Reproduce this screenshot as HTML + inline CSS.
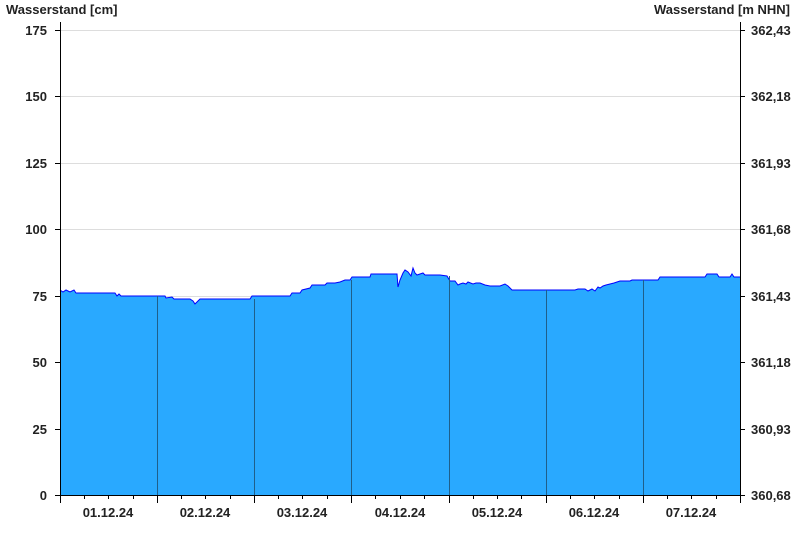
<!DOCTYPE html>
<html><head><meta charset="utf-8"><style>
html,body{margin:0;padding:0;background:#fff}
svg{display:block}
text{font-family:"Liberation Sans",Arial,sans-serif;font-size:13px;font-weight:bold;fill:#222}
</style></head><body>
<svg width="800" height="550" xmlns="http://www.w3.org/2000/svg">
<text x="6" y="14">Wasserstand [cm]</text>
<text x="790" y="14" text-anchor="end">Wasserstand [m NHN]</text>
<g stroke="#ddd" stroke-width="1">
<line x1="60" y1="30.5" x2="740" y2="30.5"/>
<line x1="60" y1="96.5" x2="740" y2="96.5"/>
<line x1="60" y1="163.5" x2="740" y2="163.5"/>
<line x1="60" y1="229.5" x2="740" y2="229.5"/>
<line x1="60" y1="296.5" x2="740" y2="296.5"/>
<line x1="60" y1="362.5" x2="740" y2="362.5"/>
<line x1="60" y1="429.5" x2="740" y2="429.5"/>
</g>
<polygon fill="#29A9FF" points="60,495 60,290 63,292 66,290 70,292 74,290 76,293 115,293 117,296 119,294 121,296 123,296 165,296 166,298 172,297 174,299 190,299 193,301 195,304 198,301 200,299 250,299 252,296 262,296 290,296 292,293 300,293 302,290 310,288 312,285 325,285 327,283 335,283 340,282 345,280 350,280 352,277 370,277 371,274 397,274 398,287 400,280 403,273 405,270 408,272 411,276 413,268 415,273 417,275 423,273 425,275 430,275 432,275 434,275 437,275 440,275 447,276 450,281 455,281 458,285 460,284 463,283 466,284 468,282 473,284 476,283 480,283 485,285 490,286 500,286 505,284 508,286 510,288 512,290 575,290 578,289 585,289 588,291 592,289 595,291 598,287 600,288 603,286 606,285 610,284 614,283 617,282 620,281 630,281 632,280 658,280 660,277 705,277 707,274 717,274 719,277 730,277 732,274 734,277 740,277 740,495"/>
<polyline fill="none" stroke="#0000ff" stroke-width="1" points="60,290 63,292 66,290 70,292 74,290 76,293 115,293 117,296 119,294 121,296 123,296 165,296 166,298 172,297 174,299 190,299 193,301 195,304 198,301 200,299 250,299 252,296 262,296 290,296 292,293 300,293 302,290 310,288 312,285 325,285 327,283 335,283 340,282 345,280 350,280 352,277 370,277 371,274 397,274 398,287 400,280 403,273 405,270 408,272 411,276 413,268 415,273 417,275 423,273 425,275 430,275 432,275 434,275 437,275 440,275 447,276 450,281 455,281 458,285 460,284 463,283 466,284 468,282 473,284 476,283 480,283 485,285 490,286 500,286 505,284 508,286 510,288 512,290 575,290 578,289 585,289 588,291 592,289 595,291 598,287 600,288 603,286 606,285 610,284 614,283 617,282 620,281 630,281 632,280 658,280 660,277 705,277 707,274 717,274 719,277 730,277 732,274 734,277 740,277"/>
<g stroke="#1f5f8a" stroke-width="1">
<line x1="157.5" y1="296" x2="157.5" y2="495"/>
<line x1="254.5" y1="299" x2="254.5" y2="495"/>
<line x1="351.5" y1="280" x2="351.5" y2="495"/>
<line x1="449.5" y1="276" x2="449.5" y2="495"/>
<line x1="546.5" y1="290" x2="546.5" y2="495"/>
<line x1="643.5" y1="280" x2="643.5" y2="495"/>
</g>
<g stroke="#000" stroke-width="1">
<line x1="60.5" y1="22" x2="60.5" y2="495"/>
<line x1="740.5" y1="22" x2="740.5" y2="495"/>
<line x1="60" y1="495.5" x2="740" y2="495.5"/>
<line x1="55" y1="30.5" x2="60" y2="30.5"/><line x1="55" y1="96.5" x2="60" y2="96.5"/><line x1="55" y1="163.5" x2="60" y2="163.5"/><line x1="55" y1="229.5" x2="60" y2="229.5"/><line x1="55" y1="296.5" x2="60" y2="296.5"/><line x1="55" y1="362.5" x2="60" y2="362.5"/><line x1="55" y1="429.5" x2="60" y2="429.5"/><line x1="55" y1="495.5" x2="60" y2="495.5"/>
<line x1="740" y1="30.5" x2="745" y2="30.5"/><line x1="740" y1="96.5" x2="745" y2="96.5"/><line x1="740" y1="163.5" x2="745" y2="163.5"/><line x1="740" y1="229.5" x2="745" y2="229.5"/><line x1="740" y1="296.5" x2="745" y2="296.5"/><line x1="740" y1="362.5" x2="745" y2="362.5"/><line x1="740" y1="429.5" x2="745" y2="429.5"/><line x1="740" y1="495.5" x2="745" y2="495.5"/>
<line x1="60.5" y1="495" x2="60.5" y2="503"/><line x1="157.5" y1="495" x2="157.5" y2="503"/><line x1="254.5" y1="495" x2="254.5" y2="503"/><line x1="351.5" y1="495" x2="351.5" y2="503"/><line x1="449.5" y1="495" x2="449.5" y2="503"/><line x1="546.5" y1="495" x2="546.5" y2="503"/><line x1="643.5" y1="495" x2="643.5" y2="503"/><line x1="740.5" y1="495" x2="740.5" y2="503"/>
</g>
<g stroke="#000" stroke-width="1">
<line x1="84.5" y1="495" x2="84.5" y2="499"/><line x1="108.5" y1="495" x2="108.5" y2="499"/><line x1="133.5" y1="495" x2="133.5" y2="499"/>
<line x1="181.5" y1="495" x2="181.5" y2="499"/><line x1="205.5" y1="495" x2="205.5" y2="499"/><line x1="230.5" y1="495" x2="230.5" y2="499"/>
<line x1="278.5" y1="495" x2="278.5" y2="499"/><line x1="302.5" y1="495" x2="302.5" y2="499"/><line x1="327.5" y1="495" x2="327.5" y2="499"/>
<line x1="375.5" y1="495" x2="375.5" y2="499"/><line x1="400.5" y1="495" x2="400.5" y2="499"/><line x1="424.5" y1="495" x2="424.5" y2="499"/>
<line x1="473.5" y1="495" x2="473.5" y2="499"/><line x1="497.5" y1="495" x2="497.5" y2="499"/><line x1="521.5" y1="495" x2="521.5" y2="499"/>
<line x1="570.5" y1="495" x2="570.5" y2="499"/><line x1="594.5" y1="495" x2="594.5" y2="499"/><line x1="619.5" y1="495" x2="619.5" y2="499"/>
<line x1="667.5" y1="495" x2="667.5" y2="499"/><line x1="691.5" y1="495" x2="691.5" y2="499"/><line x1="716.5" y1="495" x2="716.5" y2="499"/>
</g>
<g text-anchor="end">
<text x="47" y="35">175</text><text x="47" y="101">150</text><text x="47" y="168">125</text><text x="47" y="234">100</text><text x="47" y="301">75</text><text x="47" y="367">50</text><text x="47" y="434">25</text><text x="47" y="500">0</text>
</g>
<g>
<text x="751" y="35">362,43</text><text x="751" y="101">362,18</text><text x="751" y="168">361,93</text><text x="751" y="234">361,68</text><text x="751" y="301">361,43</text><text x="751" y="367">361,18</text><text x="751" y="434">360,93</text><text x="751" y="500">360,68</text>
</g>
<g text-anchor="middle">
<text x="108" y="517">01.12.24</text><text x="205" y="517">02.12.24</text><text x="302" y="517">03.12.24</text><text x="400" y="517">04.12.24</text><text x="497" y="517">05.12.24</text><text x="594" y="517">06.12.24</text><text x="691" y="517">07.12.24</text>
</g>
</svg>
</body></html>
